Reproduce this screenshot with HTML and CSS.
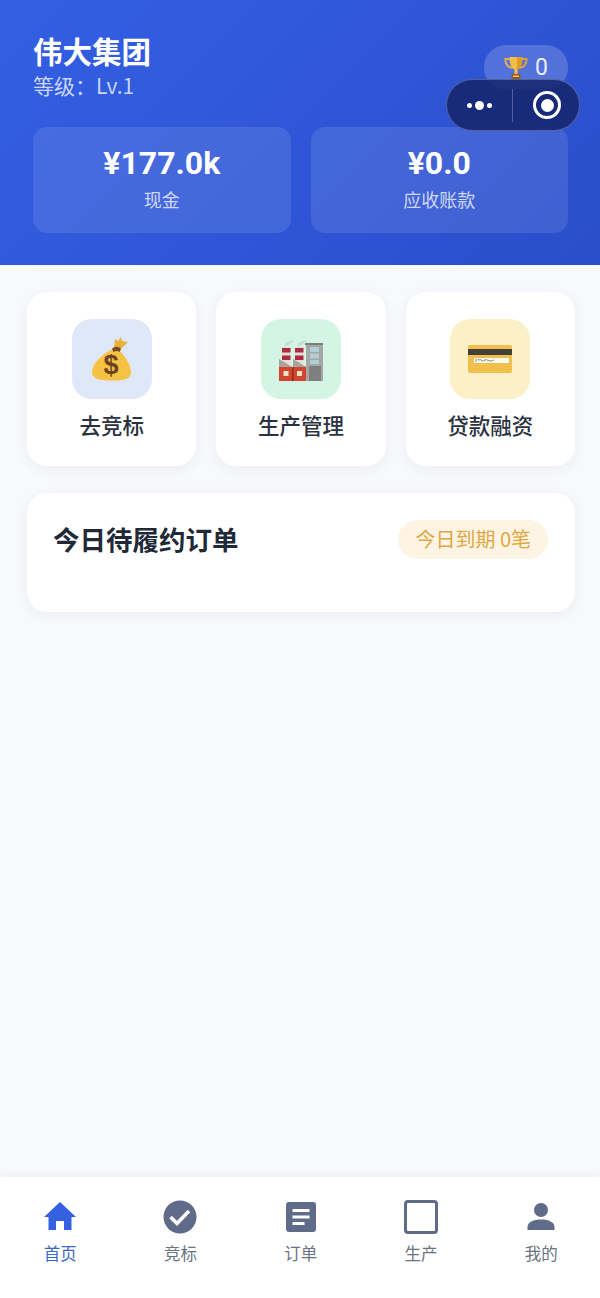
FILE: index.html
```html
<!DOCTYPE html>
<html lang="zh-CN">
<head>
    <meta charset="UTF-8">
    <meta name="viewport" content="width=device-width, initial-scale=1.0">
    <title>伟大集团</title>
    <link rel="stylesheet" href="styles.css">
</head>
<body>
    <header class="hero">
        <div class="hero-top">
            <div>
                <h1 class="company">伟大集团</h1>
                <div class="level">等级：Lv.1</div>
            </div>
            <div class="trophy-pill">
                <svg class="trophy" viewBox="0 0 24 24">
                    <path d="M6 3H1.500C1.200 8 3.500 11 8.500 12" fill="none" stroke="#e6ad48" stroke-width="2"/>
                    <path d="M18 3h4.500C22.800 8 20.500 11 15.500 12" fill="none" stroke="#e0a03a" stroke-width="2"/>
                    <path d="M5.500 1h13c0 7-2 11.500-5 12.500V18h-3v-4.500C7.500 12.500 5.500 8 5.500 1z" fill="#f4bd45"/>
                    <path d="M13 1h5.500c0 7-2 11.500-5 12.500V18H13z" fill="#e09a2a"/>
                    <rect x="7.500" y="18" width="9" height="5" rx="1" fill="#8f5a22"/>
                    <rect x="9" y="19.500" width="6" height="1.500" fill="#f2c66b"/>
                </svg>
                <span>0</span>
            </div>
        </div>
        <div class="stats">
            <div class="stat">
                <div class="stat-value">¥177.0k</div>
                <div class="stat-label">现金</div>
            </div>
            <div class="stat">
                <div class="stat-value">¥0.0</div>
                <div class="stat-label">应收账款</div>
            </div>
        </div>
        <!-- mini program capsule -->
        <div class="capsule">
            <div class="capsule-dots"><i></i><b></b><i></i></div>
            <div class="capsule-line"></div>
            <div class="capsule-ring"><b></b></div>
        </div>
    </header>

    <main class="content">
        <div class="actions">
            <div class="action">
                <div class="action-icon blue">
                    <svg viewBox="0 0 48 48" class="emoji">
                        <path d="M25 14C16 18 4 28 4 37c0 7 8 8.500 20 8.500S43 44 43 37.500C43 29 36 20 30 14z" fill="#f6c244"/>
                        <path d="M26 13l1-9 3 2 3-4 1 4 6 1-8 8z" fill="#e9b23c"/>
                        <path d="M24 14c2-3 7-3 9 0l-1.500 3c-2-1.500-4-1.500-6 0z" fill="#7c4a21"/>
                        <text x="23" y="39" class="dollar">$</text>
                    </svg>
                </div>
                <div class="action-name">去竞标</div>
            </div>
            <div class="action">
                <div class="action-icon green">
                    <svg viewBox="0 0 48 48" class="emoji">
                        <path d="M7 11c1-4 5-5 9-6 2 2-3 3-5 6zM20 11c1-4 5-5 9-6 2 2-3 3-5 6z" fill="#c4e2d2"/>
                        <rect x="29" y="8" width="17" height="38" fill="#a5a7a6"/>
                        <rect x="28" y="8" width="18" height="2" fill="#7c7f80"/>
                        <rect x="33" y="12" width="9" height="5" fill="#b4ced8"/>
                        <rect x="33" y="18.500" width="9" height="5" fill="#b4ced8"/>
                        <rect x="33" y="25" width="9" height="4" fill="#b4ced8"/>
                        <rect x="32" y="31" width="12" height="15" fill="#7f7f7f"/>
                        <rect x="5" y="12" width="8.500" height="17" fill="#e6dcd6"/>
                        <rect x="18" y="12" width="8.500" height="17" fill="#e6dcd6"/>
                        <rect x="5" y="13" width="8.500" height="4.500" fill="#ab2c40"/>
                        <rect x="18" y="13" width="8.500" height="4.500" fill="#ab2c40"/>
                        <rect x="5" y="20.500" width="8.500" height="4.500" fill="#ab2c40"/>
                        <rect x="18" y="20.500" width="8.500" height="4.500" fill="#ab2c40"/>
                        <path d="M2 24l13.500 8H2zM16 24l13.500 8H16z" fill="#a6a29c"/>
                        <rect x="2" y="32" width="27" height="14" fill="#d2452f"/>
                        <rect x="15" y="32" width="1.500" height="14" fill="#8f2c1f"/>
                        <rect x="6.500" y="36" width="5" height="5" fill="#efe3c8"/>
                        <rect x="20" y="36" width="5" height="5" fill="#efe3c8"/>
                    </svg>
                </div>
                <div class="action-name">生产管理</div>
            </div>
            <div class="action">
                <div class="action-icon yellow">
                    <svg viewBox="0 0 48 48" class="emoji">
                        <rect x="2" y="10" width="44" height="28" rx="2" fill="#f0bf4c"/>
                        <rect x="2" y="14" width="44" height="6" fill="#44403a"/>
                        <rect x="8" y="23" width="35" height="5" fill="#fdfaf0"/>
                        <path d="M10 24v3M12 24c1 3 2-1 3 1s2 1 4 0 3 1 5 1 3-1 4-1" fill="none" stroke="#555" stroke-width=".7"/>
                    </svg>
                </div>
                <div class="action-name">贷款融资</div>
            </div>
        </div>

        <section class="today">
            <h2>今日待履约订单</h2>
            <span class="due">今日到期 0笔</span>
        </section>
    </main>

    <nav class="tabbar">
        <div class="tab active">
            <svg viewBox="0 0 34 34"><path d="M17 2L1 17h4.500v13h7.500v-9h8v9h7.500V17H33z" fill="#3560e0"/></svg>
            <span>首页</span>
        </div>
        <div class="tab">
            <svg viewBox="0 0 34 34"><circle cx="17" cy="17" r="16.500" fill="#5f6b88"/><path d="M7.500 17l6.500 6.500L26 11" fill="none" stroke="#fff" stroke-width="3.600"/></svg>
            <span>竞标</span>
        </div>
        <div class="tab">
            <svg viewBox="0 0 34 34"><rect x="2" y="2" width="30" height="30" rx="3" fill="#5f6b88"/><path d="M8.500 10.500h17M8.500 17h17M8.500 23.500h12" stroke="#fff" stroke-width="3"/></svg>
            <span>订单</span>
        </div>
        <div class="tab">
            <svg viewBox="0 0 34 34"><rect x="1.500" y="1.500" width="31" height="31" rx="2.500" fill="none" stroke="#5f6b88" stroke-width="3"/></svg>
            <span>生产</span>
        </div>
        <div class="tab">
            <svg viewBox="0 0 34 34"><circle cx="17" cy="10" r="7" fill="#5f6b88"/><path d="M3.500 30v-3c0-5 6-7.500 13.500-7.500S30.500 22 30.500 27v3z" fill="#5f6b88"/></svg>
            <span>我的</span>
        </div>
    </nav>
</body>
</html>
```

FILE: styles.css
```css
* {
    box-sizing: border-box;
}

body {
    margin: 0;
    min-height: 1298px;
    display: flex;
    flex-direction: column;
    background-color: #f8f9fb;
    font-family: "Noto Sans CJK SC", "Noto Sans", sans-serif;
}

.hero {
    position: relative;
    height: 265px;
    padding: 32px 32px 0 33px;
    background: linear-gradient(135deg, #345fe3 0%, #2a4ecb 100%);
    color: #fff;
}

.hero-top {
    display: flex;
    justify-content: space-between;
    align-items: flex-start;
    height: 95px;
}

.company {
    margin: 0;
    font-size: 29.5px;
    line-height: 36px;
    font-weight: 700;
}

.level {
    margin-top: 3px;
    font-size: 21px;
    line-height: 28px;
    color: rgba(255, 255, 255, 0.75);
}

.trophy-pill {
    display: flex;
    align-items: center;
    gap: 7px;
    margin-top: 13px;
    height: 45px;
    padding: 0 20px;
    border-radius: 22px;
    background-color: rgba(255, 255, 255, 0.18);
    font-family: Roboto, sans-serif;
    font-size: 23px;
    color: rgba(255, 255, 255, 0.9);
}

.trophy {
    width: 24px;
    height: 24px;
}

.stats {
    display: grid;
    grid-template-columns: 1fr 1fr;
    gap: 20px;
}

.stat {
    height: 106px;
    padding-top: 16px;
    border-radius: 14px;
    background-color: rgba(255, 255, 255, 0.1);
    text-align: center;
}

.stat-value {
    font-family: Roboto, "Noto Sans CJK SC", sans-serif;
    font-size: 32px;
    line-height: 40px;
    font-weight: 700;
}

.stat-label {
    margin-top: 3px;
    font-size: 18px;
    line-height: 26px;
    color: rgba(255, 255, 255, 0.75);
}

.capsule {
    position: absolute;
    top: 79px;
    left: 446px;
    width: 134px;
    height: 52px;
    display: flex;
    align-items: center;
    border: 1.5px solid rgba(255, 255, 255, 0.25);
    border-radius: 26px;
    background-color: rgba(20, 35, 105, 0.84);
}

.capsule-dots {
    width: 64px;
    display: flex;
    justify-content: center;
    align-items: center;
    gap: 3px;
}

.capsule-dots i {
    width: 5px;
    height: 5px;
    border-radius: 50%;
    background-color: #fff;
}

.capsule-dots b {
    width: 9px;
    height: 9px;
    border-radius: 50%;
    background-color: #fff;
}

.capsule-line {
    width: 1px;
    height: 33px;
    margin-left: 1px;
    background-color: rgba(255, 255, 255, 0.25);
}

.capsule-ring {
    margin-left: 20px;
    width: 28px;
    height: 28px;
    display: flex;
    align-items: center;
    justify-content: center;
    border: 3px solid #fff;
    border-radius: 50%;
}

.capsule-ring b {
    width: 13px;
    height: 13px;
    border-radius: 50%;
    background-color: #fff;
}

.content {
    flex: 1;
    padding: 27px 25px 0 27px;
}

.actions {
    display: grid;
    grid-template-columns: repeat(3, 1fr);
    gap: 20px;
}

.action {
    height: 174px;
    padding-top: 27px;
    display: flex;
    flex-direction: column;
    align-items: center;
    border-radius: 20px;
    background-color: #fff;
    box-shadow: 0 3px 14px rgba(30, 50, 100, 0.06);
}

.action-icon {
    width: 80px;
    height: 80px;
    display: flex;
    align-items: center;
    justify-content: center;
    border-radius: 20px;
}

.action-icon.blue {
    background-color: #dfe8f9;
}

.action-icon.green {
    background-color: #d5f5e4;
}

.action-icon.yellow {
    background-color: #fcf0c8;
}

.emoji {
    width: 48px;
    height: 48px;
}

.dollar {
    font-family: "Liberation Sans", sans-serif;
    font-size: 27px;
    font-weight: 700;
    fill: #6b4423;
    text-anchor: middle;
}

.action-name {
    margin-top: 11px;
    font-size: 21.5px;
    line-height: 30px;
    font-weight: 500;
    color: #2a3240;
}

.today {
    margin-top: 27px;
    height: 119px;
    padding: 26px 27px 0 26px;
    display: flex;
    justify-content: space-between;
    align-items: flex-start;
    border-radius: 20px;
    background-color: #fff;
    box-shadow: 0 3px 14px rgba(30, 50, 100, 0.06);
}

.today h2 {
    margin: 0;
    font-size: 26.5px;
    line-height: 40px;
    font-weight: 700;
    color: #1f2937;
}

.due {
    height: 39px;
    margin-top: 1px;
    padding: 0 17px;
    border-radius: 20px;
    background-color: #fdf4e3;
    font-size: 20px;
    line-height: 38px;
    color: #e0a845;
}

.tabbar {
    height: 121px;
    padding-top: 23px;
    display: grid;
    grid-template-columns: repeat(5, 120.3px);
    background-color: #fff;
    box-shadow: 0 -2px 8px rgba(30, 50, 100, 0.05);
}

.tab {
    display: flex;
    flex-direction: column;
    align-items: center;
    font-size: 16.5px;
    color: #6b7280;
}

.tab svg {
    width: 34px;
    height: 34px;
}

.tab span {
    margin-top: 7px;
    line-height: 24px;
}

.tab.active {
    color: #3f67c9;
}
```
